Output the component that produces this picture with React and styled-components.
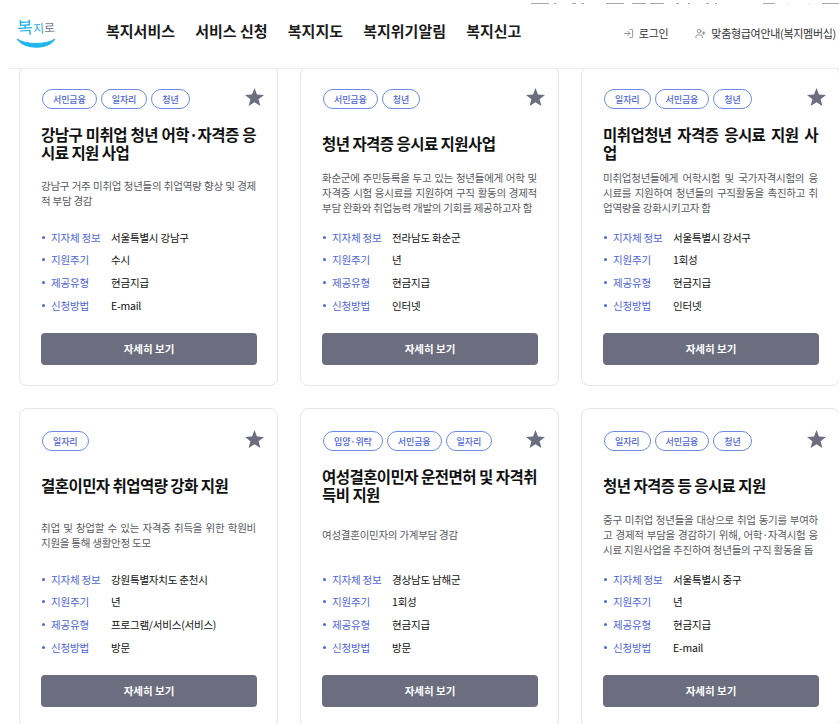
import React from 'react'
import styled, { createGlobalStyle } from 'styled-components'
import { LogIn, UserPlus } from 'lucide-react'

const FONT = '"Noto Sans CJK KR", "Noto Sans", sans-serif'

const navItems = ['복지서비스', '서비스 신청', '복지지도', '복지위기알림', '복지신고']

const stripParts = [
  { left: 11, width: 18 }, { left: 5, width: 2 }, { left: 16, width: 4 }, { left: 5, width: 3 },
  { left: 22, width: 18 }, { left: 8, width: 14 }, { left: 4, width: 14 }, { left: 12, width: 3 },
  { left: 9, width: 2 }, { left: 16, width: 3 }, { left: 6, width: 2 }, { left: 46, width: 12 },
]

const cards = [
  {
    tags: ['서민금융', '일자리', '청년'],
    title: '강남구 미취업 청년 어학·자격증 응시료 지원 사업',
    desc: '강남구 거주 미취업 청년들의 취업역량 향상 및 경제적 부담 경감',
    region: '서울특별시 강남구', cycle: '수시', type: '현금지급', method: 'E-mail',
  },
  {
    tags: ['서민금융', '청년'],
    title: '청년 자격증 응시료 지원사업',
    desc: '화순군에 주민등록을 두고 있는 청년들에게 어학 및 자격증 시험 응시료를 지원하여 구직 활동의 경제적 부담 완화와 취업능력 개발의 기회를 제공하고자 함',
    region: '전라남도 화순군', cycle: '년', type: '현금지급', method: '인터넷',
  },
  {
    tags: ['일자리', '서민금융', '청년'],
    title: '미취업청년 자격증 응시료 지원 사업',
    desc: '미취업청년들에게 어학시험 및 국가자격시험의 응시료를 지원하여 청년들의 구직활동을 촉진하고 취업역량을 강화시키고자 함',
    region: '서울특별시 강서구', cycle: '1회성', type: '현금지급', method: '인터넷',
  },
  {
    tags: ['일자리'],
    title: '결혼이민자 취업역량 강화 지원',
    desc: '취업 및 창업할 수 있는 자격증 취득을 위한 학원비 지원을 통해 생활안정 도모',
    region: '강원특별자치도 춘천시', cycle: '년', type: '프로그램/서비스(서비스)', method: '방문',
  },
  {
    tags: ['입양·위탁', '서민금융', '일자리'],
    title: '여성결혼이민자 운전면허 및 자격취득비 지원',
    desc: '여성결혼이민자의 가계부담 경감',
    region: '경상남도 남해군', cycle: '1회성', type: '현금지급', method: '방문',
  },
  {
    tags: ['일자리', '서민금융', '청년'],
    title: '청년 자격증 등 응시료 지원',
    desc: '중구 미취업 청년들을 대상으로 취업 동기를 부여하고 경제적 부담을 경감하기 위해, 어학·자격시험 응시료 지원사업을 추진하여 청년들의 구직 활동을 돕',
    region: '서울특별시 중구', cycle: '년', type: '현금지급', method: 'E-mail',
  },
]

const GlobalStyle = createGlobalStyle`
  html, body {
    margin: 0;
    height: 724px;
    overflow: hidden;
    background: #fff;
    font-family: ${FONT};
  }
`

const Page = styled.div`
  width: 839px;
  height: 724px;
  overflow: hidden;
`

const TopStrip = styled.div`
  height: 5px;
  padding-left: 520px;
  display: flex;
  align-items: flex-start;
  padding-top: 3px;
  box-sizing: border-box;
  background: #fff;
`

const StripBit = styled.i`
  display: block;
  height: 1px;
  flex: none;
  background: #a8a8a8;
  margin-left: ${p => p.$left}px;
  width: ${p => p.$width}px;
`

const StripBox = styled.i`
  display: block;
  flex: none;
  height: 2px;
  margin-left: ${p => p.$left}px;
  width: ${p => p.$width}px;
  border: 1px solid #e6e6e6;
  border-top: 0;
`

const Header = styled.header`
  position: relative;
  z-index: 2;
  height: 63px;
  margin-left: 9px;
  margin-bottom: -3px;
  padding-left: 7px;
  display: flex;
  align-items: flex-start;
  background: #fff;
  border-bottom: 1px solid #ececec;
`

const Logo = styled.div`
  width: 41px;
  margin-top: 9px;
  flex: none;
  display: flex;
  flex-direction: column;
  align-items: flex-start;
`

const LogoText = styled.div`
  display: flex;
  align-items: flex-end;
  height: 19px;
  margin-bottom: 4px;
  padding-left: 1px;
  font-weight: 400;
  transform: rotate(-3deg);
`

const LogoChar = styled.span`
  font-size: ${p => p.$size}px;
  line-height: ${p => p.$size - 2}px;
  color: ${p => p.$color};
`

const Nav = styled.nav`
  display: flex;
  gap: 20.2px;
  margin-left: 49px;
  margin-top: 15px;
`

const NavItem = styled.a`
  font-size: 15px;
  line-height: 22px;
  font-weight: 700;
  color: #1a1a1a;
  white-space: nowrap;
`

const Util = styled.div`
  display: flex;
  margin-left: auto;
  margin-top: 20px;
  margin-right: 3px;
  gap: 27px;
`

const UtilLink = styled.a`
  display: flex;
  align-items: center;
  gap: 5px;
  font-size: 11px;
  line-height: 16px;
  letter-spacing: -0.3px;
  color: #333;
  white-space: nowrap;
`

const Grid = styled.main`
  display: grid;
  grid-template-columns: repeat(3, 259px);
  gap: 22px;
  padding-left: 19px;
`

const Card = styled.article`
  box-sizing: border-box;
  height: 320px;
  padding: 22px 21px 21px;
  background: #fff;
  border: 1px solid #e6e6e6;
  border-radius: 8px;
`

const TopRow = styled.div`
  display: flex;
  justify-content: space-between;
  align-items: flex-start;
  height: 20px;
`

const Tags = styled.div`
  display: flex;
  gap: 4px;
  margin-left: 1px;
`

const Tag = styled.span`
  height: 20px;
  box-sizing: border-box;
  padding: 0 10px;
  display: flex;
  align-items: center;
  font-size: 9px;
  font-weight: 500;
  letter-spacing: -0.1px;
  color: #4f66d6;
  border: 1px solid #6e8ae2;
  border-radius: 10px;
  white-space: nowrap;
`

const FavoriteStar = styled.svg`
  flex: none;
  width: 19px;
  height: 18px;
  margin: -1px -8px 0 0;
  fill: #6c6e80;
`

const TitleBox = styled.div`
  height: 44px;
  margin-top: 12px;
  display: flex;
  align-items: center;
`

const Title = styled.h3`
  margin: 0;
  width: 100%;
  font-size: 15.5px;
  line-height: 18px;
  font-weight: 700;
  letter-spacing: -0.55px;
  color: #111;
  text-align: justify;
  word-break: break-all;
`

const DescBox = styled.div`
  height: 47px;
  margin-top: 4px;
  display: flex;
  align-items: center;
`

const Desc = styled.p`
  margin: 0;
  width: 100%;
  max-height: 45px;
  overflow: hidden;
  font-size: 10.5px;
  line-height: 15px;
  letter-spacing: -0.25px;
  color: #5a5a5f;
  text-align: justify;
  word-break: break-all;
`

const InfoList = styled.ul`
  list-style: none;
  margin: 10px 0 0;
  padding: 0;
`

const InfoRow = styled.li`
  display: flex;
  align-items: center;
  height: 22.67px;
  font-size: 10.5px;
  letter-spacing: -0.2px;
  white-space: nowrap;
`

const Label = styled.span`
  position: relative;
  width: 70px;
  padding-left: 10px;
  box-sizing: border-box;
  color: #4f66d6;

  &::before {
    content: '';
    position: absolute;
    left: 1px;
    top: 50%;
    width: 3px;
    height: 3px;
    margin-top: -1.5px;
    border-radius: 50%;
    background: #4f66d6;
  }
`

const Value = styled.span`
  color: #111;
`

const DetailButton = styled.button`
  display: block;
  width: 216px;
  height: 32px;
  margin-top: 16px;
  padding: 0;
  border: 0;
  border-radius: 4px;
  background: #6c6e80;
  color: #fff;
  font-family: ${FONT};
  font-size: 10.5px;
  font-weight: 700;
`

const ServiceCard = ({ card }) => (
  <Card>
    <TopRow>
      <Tags>
        {card.tags.map(tag => <Tag key={tag}>{tag}</Tag>)}
      </Tags>
      <FavoriteStar viewBox="0 0 19 18">
        <polygon points="9.5,0 12,6.5 19,6.9 13.6,11.3 15.4,18 9.5,14.2 3.6,18 5.4,11.3 0,6.9 7,6.5" />
      </FavoriteStar>
    </TopRow>
    <TitleBox><Title>{card.title}</Title></TitleBox>
    <DescBox><Desc>{card.desc}</Desc></DescBox>
    <InfoList>
      <InfoRow><Label>지자체 정보</Label><Value>{card.region}</Value></InfoRow>
      <InfoRow><Label>지원주기</Label><Value>{card.cycle}</Value></InfoRow>
      <InfoRow><Label>제공유형</Label><Value>{card.type}</Value></InfoRow>
      <InfoRow><Label>신청방법</Label><Value>{card.method}</Value></InfoRow>
    </InfoList>
    <DetailButton type="button">자세히 보기</DetailButton>
  </Card>
)

const App = () => (
  <Page>
    <GlobalStyle />
    <TopStrip>
      {stripParts.map((part, i) => <StripBit key={i} $left={part.left} $width={part.width} />)}
      <StripBox $left={12} $width={21} />
      <StripBit $left={12} $width={18} />
      <StripBox $left={14} $width={18} />
    </TopStrip>
    <Header>
      <Logo>
        <LogoText>
          <LogoChar $size={17} $color="#22b0e8">복</LogoChar>
          <LogoChar $size={12} $color="#22b0e8">지</LogoChar>
          <LogoChar $size={12} $color="#77778a">로</LogoChar>
        </LogoText>
        <svg width="41" height="12" viewBox="0 0 41 12">
          <path d="M1 2 C 10 8, 30 8, 39 2 C 33 13, 8 13, 1 2 Z" fill="#1fb6ee" stroke="#1fb6ee" strokeWidth="1" strokeLinejoin="round" />
        </svg>
      </Logo>
      <Nav>
        {navItems.map(item => <NavItem key={item}>{item}</NavItem>)}
      </Nav>
      <Util>
        <UtilLink><LogIn size={11} strokeWidth={1.1} />로그인</UtilLink>
        <UtilLink><UserPlus size={11} strokeWidth={1.1} />맞춤형급여안내(복지멤버십)</UtilLink>
      </Util>
    </Header>
    <Grid>
      {cards.map(card => <ServiceCard key={card.title} card={card} />)}
    </Grid>
  </Page>
)

export default App
